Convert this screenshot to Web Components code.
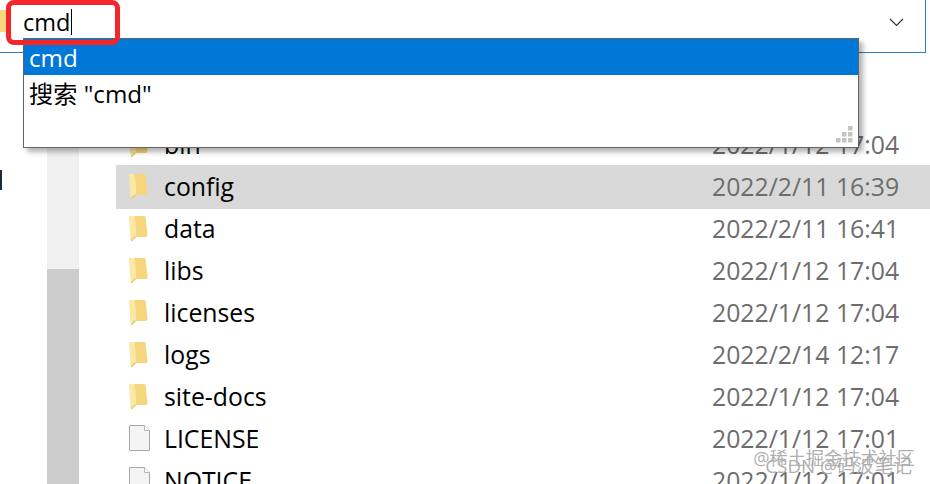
<!DOCTYPE html>
<html>
<head>
<meta charset="utf-8">
<style>
  html, body { margin: 0; height: 100%; background: #fff; overflow: hidden; }
  body { font-family: "Open Sans", "Noto Sans CJK SC", sans-serif; }
</style>
</head>
<body>
<explorer-window>
  <address-bar slot="top" value="cmd"></address-bar>
  <nav-pane slot="nav"></nav-pane>
  <file-row type="folder" name="bin" date="2022/1/12 17:04"></file-row>
  <file-row type="folder" name="config" date="2022/2/11 16:39" selected></file-row>
  <file-row type="folder" name="data" date="2022/2/11 16:41"></file-row>
  <file-row type="folder" name="libs" date="2022/1/12 17:04"></file-row>
  <file-row type="folder" name="licenses" date="2022/1/12 17:04"></file-row>
  <file-row type="folder" name="logs" date="2022/2/14 12:17"></file-row>
  <file-row type="folder" name="site-docs" date="2022/1/12 17:04"></file-row>
  <file-row type="file" name="LICENSE" date="2022/1/12 17:01"></file-row>
  <file-row type="file" name="NOTICE" date="2022/1/12 17:01"></file-row>
  <suggest-popup slot="over">
    <suggest-item selected>cmd</suggest-item>
    <suggest-item>搜索 "cmd"</suggest-item>
  </suggest-popup>
  <mark-box slot="over"></mark-box>
  <water-mark slot="over"></water-mark>
</explorer-window>

<script>
const folderIcon = `<svg width="19" height="28" viewBox="0 0 19 28">
  <path d="M5 2 H15.5 Q16.5 2 16.7 4 L18.5 21 Q18.5 23 17 23 H6 Z" fill="#f6d67c"/>
  <path d="M0 1.5 L5.5 3 Q7 10 7 18 L7 23 L2.5 27.5 L1.5 26 Z" fill="#fbe8a6"/>
  <path d="M7 23 L2.5 27.5 L2 26 L6 22 Z" fill="#ecc869"/>
</svg>`
const fileIcon = `<svg width="22" height="26" viewBox="0 0 22 26">
  <path d="M.5 .5 H15.5 L20.5 5.5 V25.5 H.5 Z" fill="#f4f4f4" stroke="#a8a8a8"/>
  <path d="M15.5 .5 V5.5 H20.5" fill="#fff" stroke="#b8b8b8"/>
</svg>`

class ExplorerWindow extends HTMLElement {
  constructor() {
    super()
    this.attachShadow({ mode: 'open' }).innerHTML = `
      <style>
        :host { display: flex; flex-direction: column; position: relative; width: 930px; height: 484px; overflow: hidden; }
        .body { flex: 1; display: flex; min-height: 0; }
        .list { flex: 1; padding-top: 70px; min-width: 0; }
      </style>
      <slot name="top"></slot>
      <div class="body">
        <slot name="nav"></slot>
        <div class="list"><slot></slot></div>
      </div>
      <slot name="over"></slot>`
  }
}

class AddressBar extends HTMLElement {
  constructor() {
    super()
    this.attachShadow({ mode: 'open' }).innerHTML = `
      <style>
        :host { display: flex; align-items: flex-start; box-sizing: border-box; height: 53px; width: 926px; border-bottom: 1px solid #2b7fc4; border-right: 1px solid #2b7fc4; }
        .icon { width: 8px; height: 22px; margin-top: 10px; background: #f8d77f; }
        .value { margin-left: 15px; font-size: 23.5px; line-height: 44px; color: #000; display: flex; }
        .caret { width: 1px; height: 26px; margin: 9px 0 0 1px; background: #000; }
        .chev { margin: 18px 21px 0 auto; }
      </style>
      <div class="icon"></div>
      <div class="value"><span id="v"></span><div class="caret"></div></div>
      <svg class="chev" width="15" height="9" viewBox="0 0 15 9"><path d="M1 1 L7.5 7.5 L14 1" fill="none" stroke="#333" stroke-width="1.2"/></svg>`
  }
  connectedCallback() { this.shadowRoot.getElementById('v').textContent = this.getAttribute('value') }
}

class NavPane extends HTMLElement {
  constructor() {
    super()
    this.attachShadow({ mode: 'open' }).innerHTML = `
      <style>
        :host { display: flex; width: 116px; flex: none; }
        .tick { width: 2px; height: 20px; margin-top: 117px; background: #1a2a3a; }
        .track { width: 32px; margin-left: 45px; display: flex; flex-direction: column; background: #f0f0f0; }
        .thumb { margin-top: 216px; flex: 1; background: #cdcdcd; }
      </style>
      <div class="tick"></div>
      <div class="track"><div class="thumb"></div></div>`
  }
}

class FileRow extends HTMLElement {
  constructor() {
    super()
    this.attachShadow({ mode: 'open' }).innerHTML = `
      <style>
        :host { display: flex; align-items: center; box-sizing: border-box; height: 42px; color: #000; font-size: 24.8px; }
        :host([selected]) { background: #d9d9d9; height: 44px; margin-bottom: -2px; padding-bottom: 2px; }
        .icon { width: 22px; height: 28px; margin-left: 13px; flex: none; display: flex; align-items: center; }
        .name { margin-left: 13px; flex: 1; }
        .date { color: #6d6d6d; width: 218px; flex: none; }
      </style>
      <span class="icon"></span><span class="name"></span><span class="date"></span>`
  }
  connectedCallback() {
    const s = this.shadowRoot
    s.querySelector('.icon').innerHTML = this.getAttribute('type') === 'folder' ? folderIcon : fileIcon
    s.querySelector('.name').textContent = this.getAttribute('name')
    s.querySelector('.date').textContent = this.getAttribute('date')
  }
}

class SuggestPopup extends HTMLElement {
  constructor() {
    super()
    this.attachShadow({ mode: 'open' }).innerHTML = `
      <style>
        :host { position: absolute; left: 23px; top: 38px; width: 836px; height: 110px; box-sizing: border-box; background: #fff; border: 1px solid #646464; box-shadow: 4px 4px 5px rgba(0,0,0,.3); }
        svg { position: absolute; right: 5px; bottom: 4px; }
      </style>
      <slot></slot>
      <svg width="17" height="17" viewBox="0 0 17 17" fill="#c4c4c4">
        <rect x="12" y="0" width="4.5" height="4.5"/>
        <rect x="6" y="6" width="4.5" height="4.5"/><rect x="12" y="6" width="4.5" height="4.5"/>
        <rect x="0" y="12" width="4.5" height="4.5"/><rect x="6" y="12" width="4.5" height="4.5"/><rect x="12" y="12" width="4.5" height="4.5"/>
      </svg>`
  }
}

class SuggestItem extends HTMLElement {
  constructor() {
    super()
    this.attachShadow({ mode: 'open' }).innerHTML = `
      <style>
        :host { display: block; height: 36px; line-height: 37px; padding-left: 5px; font-size: 24.2px; color: #000; }
        :host([selected]) { background: #0078d7; color: #fff; }
      </style>
      <slot></slot>`
  }
}

class MarkBox extends HTMLElement {
  constructor() {
    super()
    this.attachShadow({ mode: 'open' }).innerHTML = `
      <style>
        :host { position: absolute; left: 6px; top: 0; width: 114px; height: 45px; box-sizing: border-box; border: 5.5px solid #f4252b; border-radius: 8px; }
      </style>`
  }
}

class WaterMark extends HTMLElement {
  constructor() {
    super()
    this.attachShadow({ mode: 'open' }).innerHTML = `
      <style>
        :host { position: absolute; inset: 0; pointer-events: none; font-family: "Open Sans", "Noto Sans CJK SC", sans-serif; color: rgba(130,130,130,.65); text-shadow: 0 0 1px rgba(255,255,255,.8); }
        span { position: absolute; white-space: nowrap; line-height: 20px; }
        .a { right: 15px; top: 448px; font-size: 18.2px; }
        .b { right: 18px; top: 456px; font-size: 18.8px; }
      </style>
      <span class="a">@稀土掘金技术社区</span>
      <span class="b">CSDN @码波笔记</span>`
  }
}

customElements.define('explorer-window', ExplorerWindow)
customElements.define('address-bar', AddressBar)
customElements.define('nav-pane', NavPane)
customElements.define('file-row', FileRow)
customElements.define('suggest-popup', SuggestPopup)
customElements.define('suggest-item', SuggestItem)
customElements.define('mark-box', MarkBox)
customElements.define('water-mark', WaterMark)
</script>
</body>
</html>
